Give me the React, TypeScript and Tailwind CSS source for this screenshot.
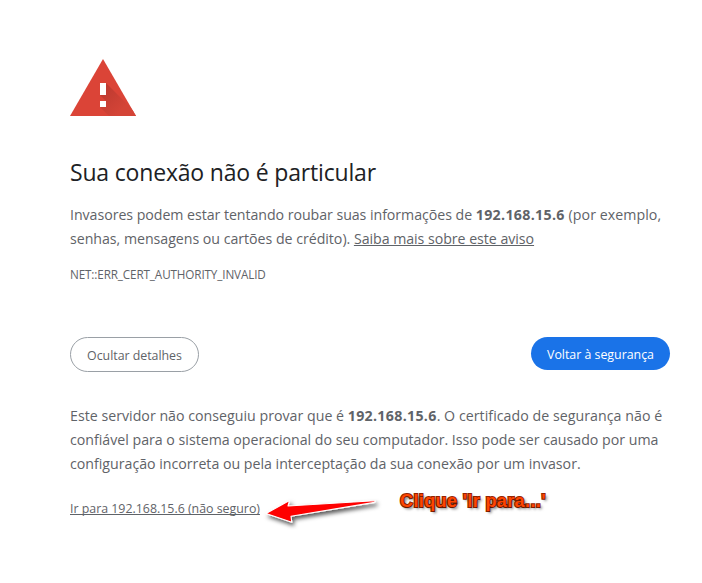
function WarningIcon() {
  return (
    <svg className="block h-[58px] w-[66px]" viewBox="0 0 66 58" aria-hidden="true">
      <defs>
        <linearGradient id="shade" x1="34" y1="28" x2="54" y2="48" gradientUnits="userSpaceOnUse">
          <stop offset="0" stopColor="#bd3a30" />
          <stop offset="1" stopColor="#d44437" />
        </linearGradient>
        <clipPath id="tri">
          <path d="M33 0 66 57H0Z" />
        </clipPath>
      </defs>
      <path d="M33 0 66 57H0Z" fill="#db4437" />
      <path d="M36 24 L70 58 H40 L30 48 L36 42 L30 36Z" fill="url(#shade)" clipPath="url(#tri)" />
      <path d="M30 24h6v12h-6zM30 42h6v6h-6z" fill="#fff" />
    </svg>
  );
}

function Arrow() {
  return (
    <svg className="block h-[50px] w-[140px] shrink-0" viewBox="0 0 140 50" aria-hidden="true">
      <defs>
        <filter id="arrowShadow" x="-10%" y="-30%" width="120%" height="180%">
          <feDropShadow dx="2" dy="3" stdDeviation="2" floodColor="#000" floodOpacity="0.65" />
        </filter>
      </defs>
      <path
        d="M6 33.5 29.5 20.5 28 26 114.5 20.8Q115.5 21.5 114.5 22.4L31 36.2 31.8 42.2Z"
        fill="#fe0000"
        stroke="#fff"
        strokeWidth="1.1"
        strokeLinejoin="round"
        filter="url(#arrowShadow)"
      />
    </svg>
  );
}

export default function App() {
  return (
    <main className="flex h-[583px] w-[702px] flex-col overflow-hidden bg-white pt-[59px] pl-[70px] font-['Open_Sans','Noto_Sans',sans-serif] text-[14.2px] leading-6 whitespace-nowrap text-[#5f6368]">
      <WarningIcon />
      <h1 className="mt-[39px] text-[23px] leading-[32px] tracking-[-0.18px] text-[#202124]">
        Sua conexão não é particular
      </h1>

      <div className="mt-[15px]">
        <p>
          <span className="tracking-[-0.05px]">Invasores podem estar tentando roubar suas informações de </span>
          <b className="font-bold tracking-[0.33px]">192.168.15.6</b>
          <span className="tracking-[0.06px]"> (por exemplo,</span>
        </p>
        <p>
          <span className="tracking-[-0.03px]">senhas, mensagens ou cartões de crédito). </span>
          <a className="tracking-[-0.04px] underline decoration-1 underline-offset-1 [text-decoration-skip-ink:none]">Saiba mais sobre este aviso</a>
        </p>
      </div>
      <p className="mt-[11px] text-[11.7px] tracking-[-0.12px]">NET::ERR_CERT_AUTHORITY_INVALID</p>

      <div className="mt-[51px] flex w-[600px] items-start justify-between text-[12.4px]">
        <button className="flex h-[35px] w-[129px] items-center justify-center rounded-full border border-[#9aa0a6] pt-[3px] tracking-[-0.03px]">
          Ocultar detalhes
        </button>
        <button className="flex h-[33px] w-[139px] items-center justify-center rounded-full bg-[#1a73e8] pt-[3px] tracking-[-0.02px] text-white">
          Voltar à segurança
        </button>
      </div>

      <div className="mt-[32px]">
        <p>
          <span className="tracking-[0.01px]">Este servidor não conseguiu provar que é </span>
          <b className="font-bold tracking-[0.31px]">192.168.15.6</b>
          <span className="tracking-[0.04px]">. O certificado de segurança não é</span>
        </p>
        <p className="tracking-[-0.01px]">confiável para o sistema operacional do seu computador. Isso pode ser causado por uma</p>
        <p className="tracking-[-0.01px]">configuração incorreta ou pela interceptação da sua conexão por um invasor.</p>
      </div>

      <div className="mt-1 flex items-start">
        <a className="mt-[17px] w-[190px] text-[12.4px] tracking-[-0.01px] underline decoration-1 underline-offset-1 [text-decoration-skip-ink:none]">
          Ir para 192.168.15.6 (não seguro)
        </a>
        <Arrow />
        <p className="mt-[9px] font-['Liberation_Sans',Arial,sans-serif] text-[18px] font-bold tracking-[0.38px] text-[#ff4500] [-webkit-text-stroke:2px_#962400] [paint-order:stroke_fill] [text-shadow:2px_2px_3px_rgba(0,0,0,0.6)]">
          Clique 'Ir para...'
        </p>
      </div>
    </main>
  );
}
